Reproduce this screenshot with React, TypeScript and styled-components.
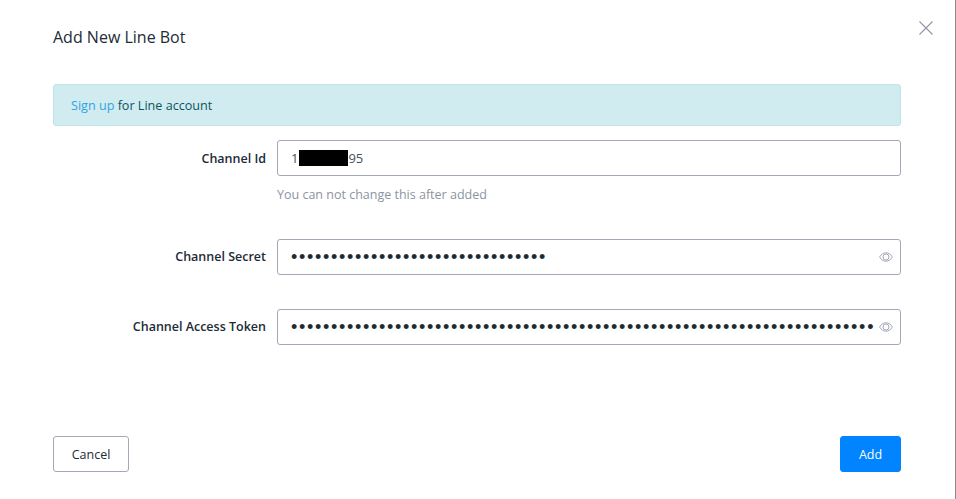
import styled, { createGlobalStyle } from "styled-components";

const GlobalStyle = createGlobalStyle`
  html, body {
    margin: 0;
    padding: 0;
    background: #fff;
    overflow: hidden;
  }
  body {
    font-family: "Open Sans", "Liberation Sans", sans-serif;
    color: #212b36;
  }
`;

const Modal = styled.div`
  position: relative;
  width: 956px;
  height: 499px;
  box-sizing: border-box;
  border-right: 1px solid #8a8a8a;
  padding: 26px 54px 27px 53px;
  display: flex;
  flex-direction: column;
`;

const Title = styled.h2`
  margin: 0;
  height: 22px;
  font-size: 16px;
  line-height: 22px;
  font-weight: 400;
  color: #212b36;
`;

const CloseBtn = styled.button`
  position: absolute;
  top: 20px;
  right: 21px;
  width: 16px;
  height: 16px;
  padding: 0;
  border: 0;
  background: none;
  display: flex;
`;

const Alert = styled.div`
  margin-top: 36px;
  height: 42px;
  box-sizing: border-box;
  padding: 0 17px;
  display: flex;
  align-items: center;
  font-size: 12.6px;
  color: #0c5460;
  background: #d1ecf1;
  border: 1px solid #bee5eb;
  border-radius: 3px;
  white-space: pre;
`;

const Link = styled.a`
  color: #2fa4e0;
`;

const Form = styled.div`
  margin-top: 14px;
  display: flex;
  flex-direction: column;
  flex: 1;
`;

const Row = styled.div<{ $gap: number }>`
  display: grid;
  grid-template-columns: 213px 1fr;
  column-gap: 11px;
  margin-bottom: ${(props) => props.$gap}px;
`;

const Label = styled.label<{ $lift?: boolean }>`
  height: 36px;
  box-sizing: border-box;
  padding-bottom: ${(props) => (props.$lift ? 2 : 0)}px;
  display: flex;
  align-items: center;
  justify-content: flex-end;
  font-size: 12.5px;
  font-weight: 600;
  color: #212b36;
`;

const Field = styled.div`
  height: 36px;
  box-sizing: border-box;
  border: 1px solid #a3a9b8;
  border-radius: 3px;
  padding: 0 7px 0 13px;
  display: flex;
  align-items: center;
  justify-content: space-between;
  font-size: 13px;
  color: #454f5b;
  background: #fff;
`;

const Value = styled.span`
  display: flex;
  align-items: center;
`;

const Redacted = styled.span`
  width: 49px;
  height: 16px;
  margin-left: 1px;
  background: #000;
`;

const Dots = styled.span`
  font-family: "Liberation Sans", sans-serif;
  font-size: 18px;
  line-height: 20px;
  letter-spacing: 1.7px;
  color: #212b36;
  white-space: nowrap;
  overflow: hidden;
`;

const Help = styled.div`
  grid-column: 2;
  margin-top: 10px;
  height: 18px;
  font-size: 12.5px;
  line-height: 18px;
  color: #8b95a1;
`;

const Footer = styled.div`
  margin-top: auto;
  display: flex;
  justify-content: space-between;
`;

const Button = styled.button<{ $primary?: boolean }>`
  height: 36px;
  width: ${(props) => (props.$primary ? 61 : 76)}px;
  box-sizing: border-box;
  padding: 0;
  font-family: inherit;
  font-size: 12.5px;
  border-radius: 3px;
  border: 1px solid ${(props) => (props.$primary ? "#0084ff" : "#a3a9b8")};
  background: ${(props) => (props.$primary ? "#0084ff" : "#fff")};
  color: ${(props) => (props.$primary ? "#fff" : "#212b36")};
`;

function EyeIcon() {
  return (
    <svg width="14" height="14" viewBox="0 0 14 14" fill="none" stroke="#a3a9b8" strokeWidth="1">
      <path d="M0.6 7C2.2 4.2 4.4 2.8 7 2.8s4.8 1.4 6.4 4.2C11.8 9.8 9.6 11.2 7 11.2S2.2 9.8 0.6 7Z" />
      <circle cx="7" cy="7" r="3" />
    </svg>
  );
}

function App() {
  return (
    <Modal>
      <GlobalStyle />
      <Title>Add New Line Bot</Title>
      <CloseBtn aria-label="Close">
        <svg width="16" height="16" viewBox="0 0 16 16" fill="none" stroke="#8f95a3" strokeWidth="1.1">
          <path d="M1.5 1.5L14.5 14.5M14.5 1.5L1.5 14.5" />
        </svg>
      </CloseBtn>
      <Alert>
        <Link>Sign up</Link> for Line account
      </Alert>
      <Form>
        <Row $gap={35}>
          <Label>Channel Id</Label>
          <Field>
            <Value>
              1<Redacted />
              95
            </Value>
          </Field>
          <Help>You can not change this after added</Help>
        </Row>
        <Row $gap={34}>
          <Label $lift>Channel Secret</Label>
          <Field>
            <Dots>{"•".repeat(32)}</Dots>
            <EyeIcon />
          </Field>
        </Row>
        <Row $gap={0}>
          <Label $lift>Channel Access Token</Label>
          <Field>
            <Dots>{"•".repeat(73)}</Dots>
            <EyeIcon />
          </Field>
        </Row>
      </Form>
      <Footer>
        <Button>Cancel</Button>
        <Button $primary>Add</Button>
      </Footer>
    </Modal>
  );
}

export default App;
